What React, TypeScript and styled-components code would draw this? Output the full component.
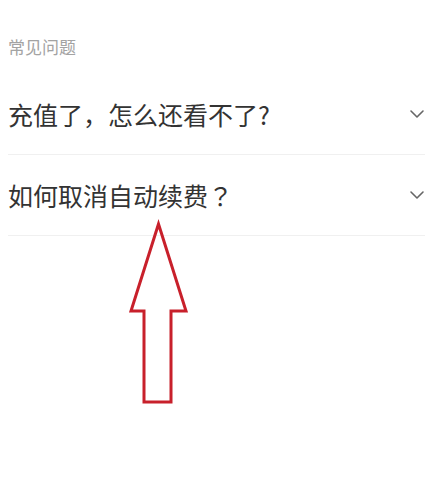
import React from "react";
import styled, { createGlobalStyle } from "styled-components";

const Global = createGlobalStyle`
  html, body { margin: 0; padding: 0; background: #fff; }
  body { font-family: "Noto Sans CJK SC", "Noto Sans", sans-serif; }
`;

const Page = styled.div`
  position: relative;
  width: 433px;
  height: 500px;
  padding: 36px 8px 0;
  box-sizing: border-box;
  overflow: hidden;
`;

const Heading = styled.div`
  font-size: 17px;
  line-height: 22px;
  color: #a3a3a3;
  margin-bottom: 16px;
`;

const List = styled.div`
  display: flex;
  flex-direction: column;
`;

const Row = styled.div`
  display: flex;
  align-items: center;
  justify-content: space-between;
  height: 80px;
  border-bottom: 1px solid #f0f0f0;
`;

const Question = styled.span`
  font-size: 25px;
  color: #333;
`;

const Punct = styled.span`
  font-family: "Noto Sans CJK TC", "Noto Sans CJK SC", sans-serif;
`;

const Chevron = styled.svg`
  width: 16px;
  height: 10px;
`;

const Arrow = styled.svg`
  position: absolute;
  left: 0;
  top: 0;
  pointer-events: none;
`;

const questions: { text: string; end: string }[] = [
  { text: "充值了，怎么还看不了", end: "?" },
  { text: "如何取消自动续费", end: "？" },
];

export default function App() {
  return (
    <Page>
      <Global />
      <Heading>常见问题</Heading>
      <List>
        {questions.map((q) => (
          <Row key={q.text}>
            <Question>
              {q.text}
              <Punct>{q.end}</Punct>
            </Question>
            <Chevron viewBox="0 0 16 10">
              <path d="M2 2 L8 8 L14 2" fill="none" stroke="#666" strokeWidth="1.6" strokeLinecap="round" strokeLinejoin="round" />
            </Chevron>
          </Row>
        ))}
      </List>
      <Arrow width="433" height="500" viewBox="0 0 433 500">
        <path
          d="M158.5 224 L131 311 L144 311 L144 402 L171 402 L171 311 L186 311 Z"
          fill="none"
          stroke="#c8202b"
          strokeWidth="3"
          strokeLinejoin="miter"
        />
      </Arrow>
    </Page>
  );
}
